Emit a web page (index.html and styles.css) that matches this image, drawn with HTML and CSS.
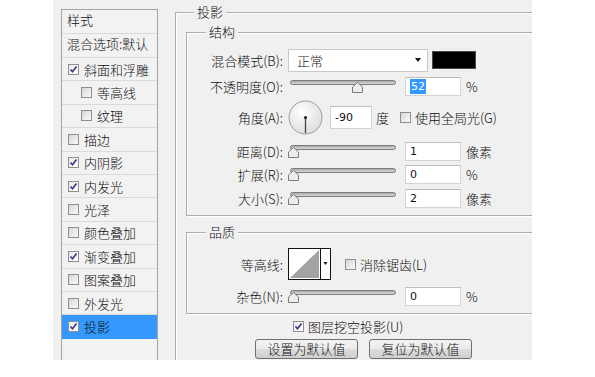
FILE: index.html
```html
<!DOCTYPE html>
<html lang="zh-CN">

<head>
    <meta charset="utf-8">
    <title>图层样式 - 投影</title>
    <link rel="stylesheet" href="styles.css">
</head>

<body>

    <div class="dialog">

        <ul class="styles">
            <li class="head">样式</li>
            <li class="head">混合选项:默认</li>
            <li><span class="cb on"><svg viewBox="0 0 9 9"><path d="M1.5 4.5l2 2.3 4-5.3"/></svg></span>斜面和浮雕</li>
            <li class="sub"><span class="cb"></span>等高线</li>
            <li class="sub"><span class="cb"></span>纹理</li>
            <li><span class="cb"></span>描边</li>
            <li><span class="cb on"><svg viewBox="0 0 9 9"><path d="M1.5 4.5l2 2.3 4-5.3"/></svg></span>内阴影</li>
            <li><span class="cb on"><svg viewBox="0 0 9 9"><path d="M1.5 4.5l2 2.3 4-5.3"/></svg></span>内发光</li>
            <li><span class="cb"></span>光泽</li>
            <li><span class="cb"></span>颜色叠加</li>
            <li><span class="cb on"><svg viewBox="0 0 9 9"><path d="M1.5 4.5l2 2.3 4-5.3"/></svg></span>渐变叠加</li>
            <li><span class="cb"></span>图案叠加</li>
            <li><span class="cb"></span>外发光</li>
            <li class="valgt"><span class="cb on"><svg viewBox="0 0 9 9"><path d="M1.5 4.5l2 2.3 4-5.3"/></svg></span>投影</li>
        </ul>

        <div class="panel">
            <fieldset class="outer">
                <legend>投影</legend>

                <fieldset class="group structure">
                    <legend>结构</legend>

                    <div class="row r-mode">
                        <label>混合模式(B):</label>
                        <div class="select">正常<span class="arrow"></span></div>
                        <div class="swatch"></div>
                    </div>

                    <div class="row r-opacity">
                        <label>不透明度(O):</label>
                        <div class="slider">
                            <div class="track"></div>
                            <svg class="thumb" style="left:64px" viewBox="0 0 11 11"><path d="M5.5 0.5L10.5 5v5.5H0.5V5z"/></svg>
                        </div>
                        <div class="num"><span class="sel">52</span></div>
                        <span class="unit">%</span>
                    </div>

                    <div class="row r-angle">
                        <label>角度(A):</label>
                        <svg class="dial" viewBox="0 0 35 35">
                            <defs>
                                <radialGradient id="dialbg" cx="40%" cy="35%" r="70%">
                                    <stop offset="0" stop-color="#ffffff"/>
                                    <stop offset="1" stop-color="#dcdcdc"/>
                                </radialGradient>
                            </defs>
                            <circle cx="17.5" cy="17.5" r="16.5" fill="url(#dialbg)" stroke="#9c9c9c"/>
                            <line x1="17.5" y1="17.5" x2="17.5" y2="33" stroke="#444" stroke-width="1.3"/>
                            <circle cx="17.5" cy="17.5" r="1.6" fill="#222"/>
                        </svg>
                        <div class="num angle">-90</div>
                        <span class="deg">度</span>
                        <span class="cb global"></span>
                        <span class="cb-label">使用全局光(G)</span>
                    </div>

                    <div class="row r-dist">
                        <label>距离(D):</label>
                        <div class="slider">
                            <div class="track"></div>
                            <svg class="thumb" style="left:0" viewBox="0 0 11 11"><path d="M5.5 0.5L10.5 5v5.5H0.5V5z"/></svg>
                        </div>
                        <div class="num">1</div>
                        <span class="unit">像素</span>
                    </div>

                    <div class="row r-spread">
                        <label>扩展(R):</label>
                        <div class="slider">
                            <div class="track"></div>
                            <svg class="thumb" style="left:0" viewBox="0 0 11 11"><path d="M5.5 0.5L10.5 5v5.5H0.5V5z"/></svg>
                        </div>
                        <div class="num">0</div>
                        <span class="unit">%</span>
                    </div>

                    <div class="row r-size">
                        <label>大小(S):</label>
                        <div class="slider">
                            <div class="track"></div>
                            <svg class="thumb" style="left:0" viewBox="0 0 11 11"><path d="M5.5 0.5L10.5 5v5.5H0.5V5z"/></svg>
                        </div>
                        <div class="num">2</div>
                        <span class="unit">像素</span>
                    </div>
                </fieldset>

                <fieldset class="group quality">
                    <legend>品质</legend>

                    <div class="row r-contour">
                        <label>等高线:</label>
                        <svg class="contour" viewBox="0 0 43 32">
                            <rect x="0.5" y="0.5" width="42" height="31" fill="#fff" stroke="#111"/>
                            <polygon points="2,30 31,2 31,30" fill="#a3a3a3"/>
                            <line x1="32.5" y1="0" x2="32.5" y2="32" stroke="#111"/>
                            <polygon points="35.5,14 39.5,14 37.5,17" fill="#111"/>
                        </svg>
                        <span class="cb aa"></span>
                        <span class="cb-label">消除锯齿(L)</span>
                    </div>

                    <div class="row r-noise">
                        <label>杂色(N):</label>
                        <div class="slider">
                            <div class="track"></div>
                            <svg class="thumb" style="left:0" viewBox="0 0 11 11"><path d="M5.5 0.5L10.5 5v5.5H0.5V5z"/></svg>
                        </div>
                        <div class="num">0</div>
                        <span class="unit">%</span>
                    </div>
                </fieldset>

                <div class="knockout">
                    <span class="cb on"><svg viewBox="0 0 9 9"><path d="M1.5 4.5l2 2.3 4-5.3"/></svg></span>
                    <span class="cb-label">图层挖空投影(U)</span>
                </div>

                <div class="buttons">
                    <button>设置为默认值</button>
                    <button>复位为默认值</button>
                </div>
            </fieldset>
        </div>

    </div>

</body>

</html>
```

FILE: styles.css
```css
* {
    box-sizing: border-box;
}

body {
    margin: 0;
    background-color: #fff;
    font-family: "Noto Sans CJK SC", "Noto Sans", sans-serif;
    font-size: 13px;
    font-weight: 300;
    color: #111;
}

.dialog {
    display: flex;
    align-items: flex-start;
    width: 479px;
    height: 360px;
    margin-left: 53px;
    background-color: #f0f0f0;
    overflow: hidden;
}

/* left list */

.styles {
    list-style: none;
    flex-shrink: 0;
    width: 97px;
    height: 360px;
    margin: 9px 0 0 8px;
    padding: 0;
    background-color: #f2f2f2;
    border: 1px solid #a4a4a4;
    border-bottom: none;
}

.styles li {
    display: flex;
    align-items: center;
    gap: 5px;
    height: 23.4px;
    padding-left: 6px;
    border-bottom: 1px solid #dadada;
    line-height: 1;
    white-space: nowrap;
}

.styles li.head {
    height: 24px;
    padding-left: 5px;
    padding-bottom: 4px;
}

.styles li.sub {
    padding-left: 19px;
}

.styles li.valgt {
    background-color: #3399ff;
    border-bottom-color: #3399ff;
}

/* checkbox */

.cb {
    display: inline-flex;
    align-items: center;
    justify-content: center;
    flex-shrink: 0;
    width: 11px;
    height: 11px;
    border: 1px solid #8f8f8f;
    background: linear-gradient(135deg, #d6d6d6, #fbfbfb);
}

.cb.on {
    background: linear-gradient(135deg, #e9e9e9, #ffffff);
}

.cb svg {
    width: 9px;
    height: 9px;
}

.cb path {
    fill: none;
    stroke: #36378c;
    stroke-width: 1.6;
}

.cb-label {
    margin-left: 4px;
    white-space: nowrap;
}

/* right panel */

.panel {
    flex-shrink: 0;
    width: 377px;
    margin-left: 17px;
}

fieldset {
    min-width: 0;
    margin: 0;
    padding: 0;
    border: 1px solid #adadad;
    box-shadow: inset 1px 1px 0 #fff, 1px 1px 0 #fff;
}

legend {
    padding: 0 3px;
    line-height: 16px;
    background-color: #f0f0f0;
}

.outer {
    width: 377px;
    margin-top: 4px;
    padding-bottom: 20px;
}

.outer > legend {
    margin-left: 18px;
}

.group {
    margin: 4px 10px 0 10px;
    padding: 8px 0 7px 0;
}

.group > legend {
    margin-left: 19px;
}

.quality {
    margin-top: 8px;
}

.row {
    display: flex;
    align-items: center;
    height: 20px;
    white-space: nowrap;
}

.row label {
    flex-shrink: 0;
    width: 96px;
    margin-right: 5px;
    text-align: right;
}

.r-mode {
    height: 24px;
}

.r-opacity {
    margin-top: 4px;
}

.r-angle {
    height: 34px;
    margin-top: 4px;
}

.r-dist {
    margin-top: 7px;
}

.r-spread {
    margin-top: 3px;
}

.r-size {
    margin-top: 4px;
}

.r-contour {
    height: 32px;
}

.r-noise {
    margin-top: 6px;
}

.select {
    display: flex;
    align-items: center;
    justify-content: space-between;
    width: 140px;
    height: 23px;
    padding: 0 6px 0 8px;
    background-color: #fff;
    border: 1px solid #c9c9c9;
}

.arrow {
    width: 0;
    height: 0;
    border-left: 3.5px solid transparent;
    border-right: 3.5px solid transparent;
    border-top: 4px solid #111;
}

.swatch {
    width: 44px;
    height: 18px;
    margin-left: 4px;
    background-color: #000;
    border: 1px solid #4a4a4a;
}

.slider {
    position: relative;
    flex-shrink: 0;
    width: 110px;
    height: 12px;
}

.track {
    width: 106px;
    height: 5px;
    margin-left: 2px;
    border: 1px solid #7b7b7b;
    border-radius: 3px;
    background: linear-gradient(#a9a9a9, #d8d8d8);
}

.thumb {
    position: absolute;
    top: 2px;
    width: 11px;
    height: 11px;
}

.thumb path {
    fill: #ececec;
    stroke: #7c7c7c;
}

.num {
    display: flex;
    align-items: center;
    width: 56px;
    height: 19px;
    margin-left: 7px;
    padding-left: 4px;
    background-color: #fff;
    border: 1px solid #d3d3d3;
    border-top-color: #bdbdbd;
    font-family: "DejaVu Sans", sans-serif;
    font-size: 11px;
    font-weight: 400;
}

.sel {
    padding: 1px 1px;
    background-color: #3399ff;
    color: #fff;
}

.unit {
    margin-left: 5px;
}

.dial {
    width: 35px;
    height: 35px;
    flex-shrink: 0;
}

.num.angle {
    width: 42px;
    height: 23px;
}

.deg {
    margin-left: 4px;
}

.cb.global {
    margin-left: 11px;
}

.contour {
    width: 43px;
    height: 32px;
    flex-shrink: 0;
}

.cb.aa {
    margin-left: 14px;
}

.knockout {
    display: flex;
    align-items: center;
    height: 16px;
    margin-top: 4px;
    padding-left: 117px;
}

.buttons {
    display: flex;
    justify-content: center;
    gap: 11px;
    margin-top: 5px;
}

.buttons button {
    width: 103px;
    height: 20px;
    padding: 0;
    border: 1px solid #707070;
    border-radius: 3px;
    background: linear-gradient(#f3f3f3 0%, #ebebeb 50%, #dddddd 51%, #cfcfcf 100%);
    font-family: "Noto Sans CJK SC", sans-serif;
    font-size: 13px;
    font-weight: 300;
    line-height: 16px;
    color: #111;
}
```
